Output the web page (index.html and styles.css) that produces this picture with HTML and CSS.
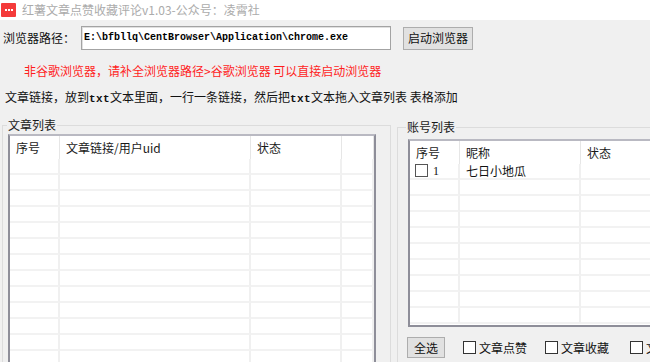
FILE: index.html
```html
<!DOCTYPE html>
<html lang="zh-CN">
<head>
<meta charset="utf-8">
<title>红薯文章点赞收藏评论</title>
<link rel="stylesheet" href="styles.css">
</head>
<body>
<div class="titlebar">
  <span class="appicon"><i></i><i></i><i></i></span>
  <span class="title">红薯文章点赞收藏评论v1.03-公众号：凌霄社</span>
</div>
<div class="main">
  <div class="pathrow">
    <span class="label">浏览器路径：</span>
    <div class="input">E:\bfbllq\CentBrowser\Application\chrome.exe</div>
    <button class="btn btn-launch">启动浏览器</button>
  </div>
  <div class="warn">非谷歌浏览器，请补全浏览器路径&gt;谷歌浏览器 可以直接启动浏览器</div>
  <div class="hint">文章链接，放到<span class="mono">txt</span>文本里面，一行一条链接，然后把<span class="mono">txt</span>文本拖入文章列表 表格添加</div>
  <div class="groups">
    <fieldset class="group group-left">
      <legend>文章列表</legend>
      <div class="grid grid-left">
        <div class="hc">序号</div><div class="hc">文章链接/用户uid</div><div class="hc">状态</div><div class="hc"></div>
        <div class="c"></div><div class="c"></div><div class="c"></div><div class="c"></div>
        <div class="c"></div><div class="c"></div><div class="c"></div><div class="c"></div>
        <div class="c"></div><div class="c"></div><div class="c"></div><div class="c"></div>
        <div class="c"></div><div class="c"></div><div class="c"></div><div class="c"></div>
        <div class="c"></div><div class="c"></div><div class="c"></div><div class="c"></div>
        <div class="c"></div><div class="c"></div><div class="c"></div><div class="c"></div>
        <div class="c"></div><div class="c"></div><div class="c"></div><div class="c"></div>
        <div class="c"></div><div class="c"></div><div class="c"></div><div class="c"></div>
        <div class="c"></div><div class="c"></div><div class="c"></div><div class="c"></div>
        <div class="c"></div><div class="c"></div><div class="c"></div><div class="c"></div>
        <div class="c"></div><div class="c"></div><div class="c"></div><div class="c"></div>
        <div class="c"></div><div class="c"></div><div class="c"></div><div class="c"></div>
        <div class="c"></div><div class="c"></div><div class="c"></div><div class="c"></div>
      </div>
    </fieldset>
    <fieldset class="group group-right">
      <legend>账号列表</legend>
      <div class="grid grid-right">
        <div class="hc">序号</div><div class="hc">昵称</div><div class="hc">状态</div>
        <div class="c c-idx"><span class="cb cb-row"></span>1</div><div class="c">七日小地瓜</div><div class="c"></div>
        <div class="c"></div><div class="c"></div><div class="c"></div>
        <div class="c"></div><div class="c"></div><div class="c"></div>
        <div class="c"></div><div class="c"></div><div class="c"></div>
        <div class="c"></div><div class="c"></div><div class="c"></div>
        <div class="c"></div><div class="c"></div><div class="c"></div>
        <div class="c"></div><div class="c"></div><div class="c"></div>
        <div class="c"></div><div class="c"></div><div class="c"></div>
        <div class="c"></div><div class="c"></div><div class="c"></div>
        <div class="c"></div><div class="c"></div><div class="c"></div>
      </div>
      <div class="actions">
        <button class="btn btn-all">全选</button>
        <label class="opt"><span class="cb"></span>文章点赞</label>
        <label class="opt"><span class="cb"></span>文章收藏</label>
        <label class="opt opt-last"><span class="cb"></span>文章评论</label>
      </div>
    </fieldset>
  </div>
</div>
</body>
</html>
```

FILE: styles.css
```css
html, body {
  margin: 0;
  padding: 0;
}
body {
  width: 650px;
  height: 362px;
  overflow: hidden;
  background: #f0f0f0;
  font-family: "Noto Sans CJK SC", "Microsoft YaHei", sans-serif;
  font-size: 12px;
  line-height: 16px;
  color: #1a1a1a;
}
.titlebar {
  height: 20px;
  background: #ffffff;
  display: flex;
  align-items: center;
}
.appicon {
  width: 15px;
  height: 14px;
  margin-left: 1px;
  background: #f43b3b;
  border-radius: 1px;
  display: flex;
  align-items: center;
  justify-content: center;
  gap: 1px;
}
.appicon i {
  width: 2px;
  height: 2px;
  background: #ffffff;
  display: block;
}
.title {
  margin-left: 6px;
  color: #ababab;
  font-size: 12px;
}
.main {
  display: flex;
  flex-direction: column;
}
.pathrow {
  display: flex;
  align-items: center;
  margin-top: 6px;
  height: 24px;
}
.label {
  padding-left: 3px;
  width: 75px;
  font-size: 12px;
  color: #111;
  flex-shrink: 0;
}
.input {
  box-sizing: border-box;
  width: 310px;
  height: 24px;
  margin-left: 3px;
  flex-shrink: 0;
  background: #ffffff;
  border: 1px solid #a3a3a3;
  box-shadow: inset 1px 1px 0 #e0e0e0;
  font-family: "Liberation Mono", "Courier New", monospace;
  font-size: 10px;
  font-weight: bold;
  line-height: 22px;
  padding-left: 2px;
  color: #000;
  white-space: nowrap;
  overflow: hidden;
}
.btn {
  box-sizing: border-box;
  background: #e1e1e1;
  border: 1px solid #adadad;
  font-family: "Noto Sans CJK SC", sans-serif;
  font-size: 12px;
  line-height: 16px;
  color: #111;
  padding: 0;
  border-radius: 0;
  white-space: nowrap;
  flex-shrink: 0;
}
.btn-launch {
  width: 70px;
  height: 23px;
  margin-left: 12px;
}
.warn {
  margin-top: 13px;
  padding-left: 24px;
  color: #ff1e1e;
}
.hint {
  margin-top: 10px;
  padding-left: 5px;
  color: #111;
  white-space: nowrap;
}
.mono {
  font-family: "Liberation Mono", "Courier New", monospace;
  font-size: 11px;
  font-weight: bold;
  letter-spacing: 0.4px;
}
.groups {
  display: flex;
  align-items: flex-start;
  margin-top: 10px;
}
.group {
  box-sizing: border-box;
  margin: 0;
  border: 1px solid #dcdcdc;
  min-width: 0;
  flex-shrink: 0;
}
.group legend {
  padding: 0 1px;
  margin-left: -1px;
  line-height: 16px;
  color: #1a1a1a;
}
.group-left {
  width: 389px;
  margin-left: 2px;
  padding: 1px 0 0 5px;
  height: 260px;
}
.group-right {
  width: 270px;
  margin-left: 6px;
  margin-top: 2px;
  padding: 4px 0 0 10px;
  height: 260px;
}
.group-right legend {
  margin-left: -2px;
}
.grid {
  box-sizing: border-box;
  display: grid;
  background: #ffffff;
  border-top: 2px solid #b9b9c2;
  border-left: 2px solid #8e8e99;
  border-right: 2px solid #8e8e99;
  overflow: hidden;
  grid-auto-rows: 16px;
}
.grid-left {
  width: 368px;
  height: 240px;
  grid-template-columns: 50px 191px 91px 1fr;
  grid-template-rows: 23px;
}
.grid-right {
  width: 300px;
  height: 188px;
  border-bottom: 2px solid #8e8e99;
  grid-template-columns: 50px 121px 1fr;
  grid-template-rows: 23px;
}
.hc {
  box-sizing: border-box;
  padding: 4px 0 0 6px;
  border-right: 1px solid #e6e6e6;
  white-space: nowrap;
  color: #1a1a1a;
}
.c {
  box-sizing: border-box;
  border-bottom: 2px solid #f2f2f2;
  border-right: 2px solid #f0f0f0;
  white-space: nowrap;
  padding-left: 6px;
  line-height: 14px;
  color: #111;
}
.c-idx {
  display: flex;
  align-items: center;
  padding-left: 5px;
  padding-bottom: 1px;
  font-family: "Liberation Serif", serif;
}
.cb {
  box-sizing: border-box;
  display: inline-block;
  width: 13px;
  height: 13px;
  background: #ffffff;
  border: 1px solid #333333;
  flex-shrink: 0;
}
.cb-row {
  border-color: #555;
  margin-right: 5px;
}
.actions {
  display: flex;
  align-items: center;
  margin-top: 10px;
  margin-left: -1px;
  white-space: nowrap;
}
.btn-all {
  width: 38px;
  height: 21px;
}
.opt {
  display: flex;
  align-items: center;
  gap: 3px;
  margin-left: 18px;
  color: #111;
  white-space: nowrap;
  flex-shrink: 0;
}
.opt-last {
  margin-left: 21px;
}
```
